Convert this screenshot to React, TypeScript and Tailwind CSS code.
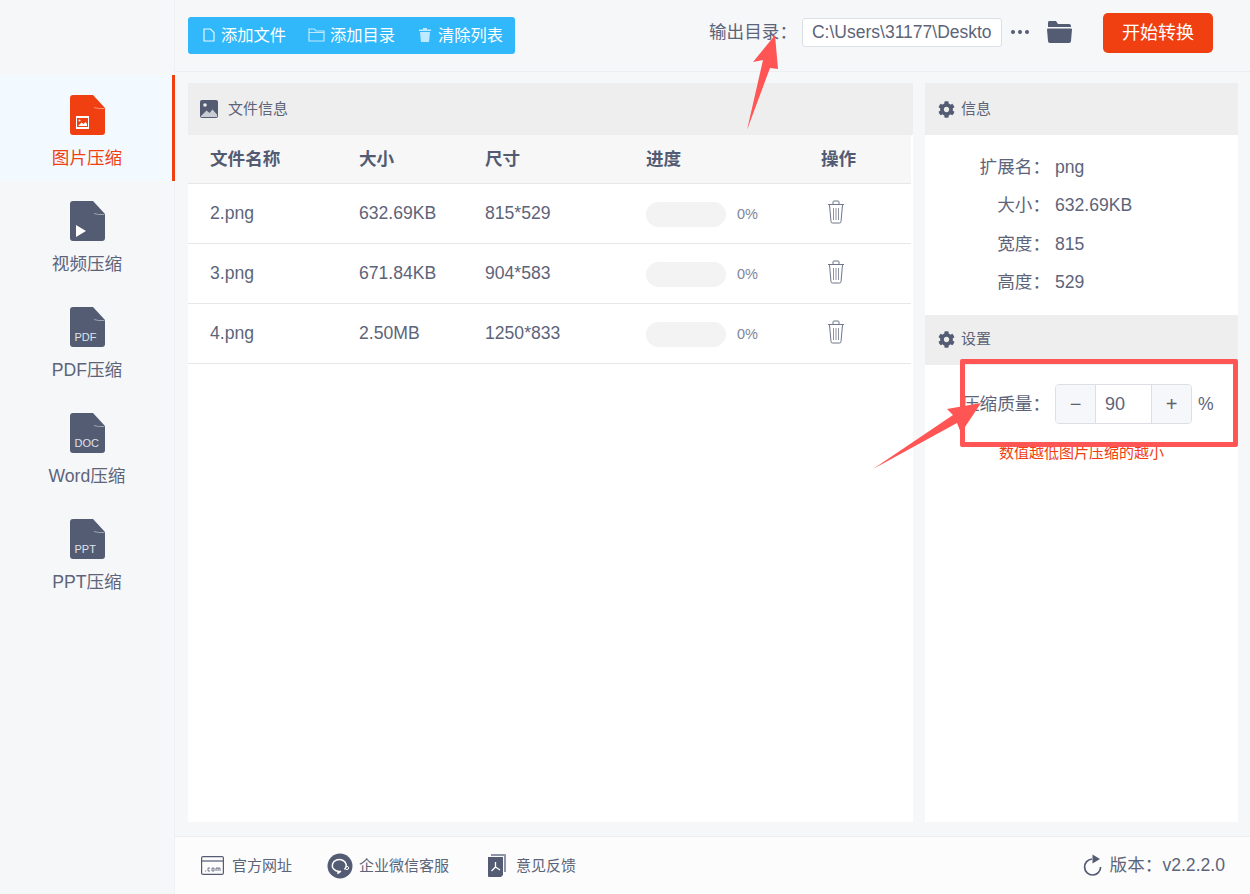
import React from 'react';
import { FaCog } from 'react-icons/fa';

const files = [
  { name: '2.png', size: '632.69KB', dim: '815*529' },
  { name: '3.png', size: '671.84KB', dim: '904*583' },
  { name: '4.png', size: '2.50MB', dim: '1250*833' },
];

const info = [
  { label: '扩展名：', value: 'png' },
  { label: '大小：', value: '632.69KB' },
  { label: '宽度：', value: '815' },
  { label: '高度：', value: '529' },
];

function FileShape({ color, children }: { color: string; children?: React.ReactNode }) {
  return (
    <div className="relative w-[35px] h-[40px]">
      <svg width="35" height="40" viewBox="0 0 35 40" className="block">
        <path d="M3 0H23L35 13V37a3 3 0 0 1-3 3H3a3 3 0 0 1-3-3V3a3 3 0 0 1 3-3Z" fill={color} />
        <path d="M24 12.5Q28 14 34.5 13.5" stroke="#ffffff" strokeOpacity="0.55" strokeWidth="0.8" fill="none" />
      </svg>
      {children}
    </div>
  );
}

function SideItem({ label, active, children }: { label: string; active?: boolean; children?: React.ReactNode }) {
  return (
    <div
      className={
        active
          ? 'h-[106px] flex flex-col items-center pt-[20px] pl-[2px] bg-[#f2faff] border-r-[3px] border-[#f04012] -mr-px'
          : 'h-[106px] flex flex-col items-center pt-[20px]'
      }
    >
      <FileShape color={active ? '#f04012' : '#545c73'}>{children}</FileShape>
      <span className={active ? 'mt-[10px] text-[17.6px] leading-[26px] text-[#f04012]' : 'mt-[10px] text-[17.6px] leading-[26px] text-[#5d6479]'}>
        {label}
      </span>
    </div>
  );
}

function DocTag({ text }: { text: string }) {
  return (
    <span className="absolute left-[5px] bottom-[4px] text-[11px] leading-[12px] text-[#dfe2ea]">{text}</span>
  );
}

function TrashIcon() {
  return (
    <svg width="18" height="24" viewBox="0 0 18 24" fill="none" stroke="#6f7689" strokeWidth="1">
      <path d="M1 4.5H17M6 4V2a1 1 0 0 1 1-1h4a1 1 0 0 1 1 1v2" />
      <path d="M2.5 5L4 21.5a1.5 1.5 0 0 0 1.5 1.5h7a1.5 1.5 0 0 0 1.5-1.5L15.5 5" />
      <path d="M6.5 8V20M9 8V20M11.5 8V20" strokeWidth="0.8" />
    </svg>
  );
}

export default function App() {
  return (
    <div className="relative w-[1250px] h-[894px] overflow-hidden flex bg-[#f6f7f9] text-[#5d6479] font-['Liberation_Sans','Noto_Sans_CJK_SC',sans-serif]">
      {/* sidebar */}
      <aside className="w-[175px] shrink-0 pt-[75px] border-r border-[#eef0f3]">
        <SideItem label="图片压缩" active>
          <div className="absolute left-[6px] top-[21px] w-[13px] h-[13px] bg-white flex items-center justify-center">
            <svg width="11" height="9" viewBox="0 0 11 9">
              <rect width="11" height="9" fill="#f04012" />
              <circle cx="2.5" cy="2.4" r="1" fill="#fff" />
              <path d="M1 8L4.5 4.5L6.5 6L8.5 4L10 6V8Z" fill="#fff" />
            </svg>
          </div>
        </SideItem>
        <SideItem label="视频压缩">
          <svg className="absolute left-[6px] top-[24px]" width="10" height="12" viewBox="0 0 10 12">
            <path d="M0 0L10 6L0 12Z" fill="#fff" />
          </svg>
        </SideItem>
        <SideItem label="PDF压缩">
          <DocTag text="PDF" />
        </SideItem>
        <SideItem label="Word压缩">
          <DocTag text="DOC" />
        </SideItem>
        <SideItem label="PPT压缩">
          <DocTag text="PPT" />
        </SideItem>
      </aside>

      <div className="flex-1 flex flex-col min-w-0">
        {/* top bar */}
        <header className="h-[72px] shrink-0 border-b border-[#eceef1] flex items-center pl-[13px] pr-[37px]">
          <div className="h-[37px] w-[327px] -mt-[1px] bg-[#30b8fa] rounded-[3px] flex items-center pl-[15px] text-[16.25px] text-white">
            <svg width="12" height="14" viewBox="0 0 12 14" fill="none" stroke="#e6f6ff" strokeWidth="1.2">
              <path d="M1 1H7.5L11 4.5V13H1Z" />
            </svg>
            <span className="ml-[6px]">添加文件</span>
            <svg className="ml-[22px]" width="17" height="14" viewBox="0 0 17 14" fill="none" stroke="#bfe9ff" strokeWidth="1.2">
              <path d="M1 13V1H6.5L8 3H16V13ZM1 4.5H16" />
            </svg>
            <span className="ml-[5px]">添加目录</span>
            <svg className="ml-[24px]" width="12" height="14" viewBox="0 0 12 14" fill="#bfe9ff">
              <path d="M4 0H8V1.5H12V3H0V1.5H4ZM1 4H11L10 14H2Z" />
            </svg>
            <span className="ml-[7px]">清除列表</span>
          </div>
          <span className="ml-[194px] text-[17.6px] whitespace-nowrap -mt-[7px]">输出目录：</span>
          <div className="ml-[5px] w-[200px] h-[29px] bg-white border border-[#dcdfe6] rounded-[3px] pl-[9px] text-[17.5px] leading-[27px] overflow-hidden whitespace-nowrap -mt-[7px]">
            C:\Users\31177\Deskto
          </div>
          <div className="ml-[9px] flex gap-[3px] -mt-[7px]">
            <i className="block w-[4px] h-[4px] rounded-full bg-[#545c73]" />
            <i className="block w-[4px] h-[4px] rounded-full bg-[#545c73]" />
            <i className="block w-[4px] h-[4px] rounded-full bg-[#545c73]" />
          </div>
          <svg className="ml-[18px] -mt-[7px]" width="25" height="22" viewBox="0 0 25 22">
            <path d="M2 0H9L11 3H22a2 2 0 0 1 2 2V6H1V2a2 2 0 0 1 1-2Z" fill="#545c73" />
            <path d="M1 7.5H24a1 1 0 0 1 1 1L24 20a2 2 0 0 1-2 2H3a2 2 0 0 1-2-2L0 8.5a1 1 0 0 1 1-1Z" fill="#545c73" />
          </svg>
          <button className="ml-[31px] w-[110px] h-[40px] -mt-[5px] bg-[#f04012] rounded-[5px] text-white text-[18px]">开始转换</button>
        </header>

        {/* panels */}
        <main className="flex-1 min-h-0 flex gap-[12px] pt-[11px] pb-[14px] pl-[13px] pr-[12px]">
          <section className="w-[725px] bg-white flex flex-col">
            <div className="h-[52px] bg-[#eeeeee] flex items-center pl-[12px] gap-[10px] text-[15px]">
              <svg width="18" height="18" viewBox="0 0 18 18">
                <rect width="18" height="18" rx="2" fill="#545c73" />
                <circle cx="5" cy="5" r="1.8" fill="#eee" />
                <path d="M1 16L6.5 10.5L9.5 13L12.5 9.5L17 14.5V17H1Z" fill="#c9ccd5" />
              </svg>
              <span>文件信息</span>
            </div>
            <div className="w-[723px]">
              <div className="h-[49px] bg-[#f7f7f7] border-b border-[#e6e7ea] pl-[22px] grid grid-cols-[149px_126px_161px_175px_1fr] items-center text-[17.6px] font-bold text-[#535b73]">
                <span>文件名称</span>
                <span>大小</span>
                <span>尺寸</span>
                <span>进度</span>
                <span>操作</span>
              </div>
              {files.map((f) => (
                <div key={f.name} className="h-[60px] border-b border-[#e6e7ea] pl-[22px] grid grid-cols-[149px_126px_161px_175px_1fr] items-center text-[17.6px] text-[#5d6479]">
                  <span className="-mt-[1px]">{f.name}</span>
                  <span className="-mt-[1px]">{f.size}</span>
                  <span className="-mt-[1px]">{f.dim}</span>
                  <div className="flex items-center pt-[1px]">
                    <div className="w-[80px] h-[25px] rounded-full bg-[#f3f3f3]" />
                    <span className="ml-[11px] pt-[1px] text-[14.5px] text-[#80869a]">0%</span>
                  </div>
                  <div className="pl-[6px] pt-[1px] -mt-[4px]">
                    <TrashIcon />
                  </div>
                </div>
              ))}
            </div>
          </section>

          <section className="w-[313px] bg-white flex flex-col">
            <div className="h-[52px] bg-[#eeeeee] flex items-center pl-[13px] gap-[6px] text-[15px]">
              <FaCog className="w-[17px] h-[17px] text-[#545c73]" />
              <span>信息</span>
            </div>
            <div className="pt-[13px] h-[180px] shrink-0">
              {info.map((row) => (
                <div key={row.label} className="h-[38.3px] flex items-center text-[17.6px]">
                  <span className="w-[125px] text-right">{row.label}</span>
                  <span className="ml-[5px]">{row.value}</span>
                </div>
              ))}
            </div>
            <div className="h-[50px] pb-[2px] bg-[#eeeeee] flex items-center pl-[13px] gap-[6px] text-[15px]">
              <FaCog className="w-[17px] h-[17px] text-[#545c73]" />
              <span>设置</span>
            </div>
            <div className="mt-[19px] flex items-center text-[17.6px]">
              <span className="w-[125px] text-right">压缩质量：</span>
              <div className="ml-[5px] w-[137px] h-[40px] border border-[#dcdfe6] rounded-[4px] flex overflow-hidden">
                <span className="w-[40px] bg-[#f5f7fa] border-r border-[#dcdfe6] flex items-center justify-center text-[20px] text-[#606266]">−</span>
                <span className="flex-1 flex items-center pl-[9px] text-[18px]">90</span>
                <span className="w-[40px] bg-[#f5f7fa] border-l border-[#dcdfe6] flex items-center justify-center text-[20px] text-[#606266]">+</span>
              </div>
              <span className="ml-[6px] text-[17.6px]">%</span>
            </div>
            <p className="mt-[19px] pl-[74px] text-[15px] leading-[20px] text-[#f04012] whitespace-nowrap">数值越低图片压缩的越小</p>
          </section>
        </main>

        {/* footer */}
        <footer className="h-[58px] shrink-0 bg-[#fcfcfc] border-t border-[#eceef1] flex items-center pl-[26px] pr-[25px] text-[15px] text-[#5d6479]">
          <svg width="23" height="19" viewBox="0 0 23 19" fill="none">
            <rect x="0.6" y="0.6" width="21.8" height="17.8" rx="1.5" stroke="#545c73" strokeWidth="1.2" />
            <path d="M1 5H22" stroke="#545c73" strokeWidth="1.2" />
            <path d="M4 15h1.2M7 12h2M7 15h2M7 12v3M11 12h2v3h-2zM15 15v-3h4v3M17 12v3" stroke="#545c73" strokeWidth="0.8" />
          </svg>
          <span className="ml-[8px] pt-[1px]">官方网址</span>
          <svg className="ml-[35px]" width="26" height="26" viewBox="0 0 26 26">
            <circle cx="13" cy="13" r="12.5" fill="#545c73" />
            <path d="M17.5 16.5A7 6 0 1 0 12 18.5L10.5 20.5L14 18.2" fill="none" stroke="#fff" strokeWidth="1.5" />
            <circle cx="20" cy="15" r="1.6" fill="none" stroke="#fff" strokeWidth="1" />
          </svg>
          <span className="ml-[6px] pt-[1px]">企业微信客服</span>
          <svg className="ml-[39px]" width="18" height="23" viewBox="0 0 18 23">
            <path d="M3 2V0H17a1 1 0 0 1 1 1V18H16V2Z" fill="#8f95a6" />
            <path d="M0 3H15V21L13 23H1a1 1 0 0 1-1-1Z" fill="#545c73" />
            <path d="M7.5 8V13M7.5 13L3.5 17M7.5 13L12 16" stroke="#fff" strokeWidth="1.3" fill="none" />
          </svg>
          <span className="ml-[10px] pt-[1px]">意见反馈</span>
          <div className="ml-auto flex items-center text-[17.6px]">
            <svg className="mr-[8px]" width="19" height="22" viewBox="0 0 19 22" fill="none">
              <path d="M9 5A8 8 0 1 0 17.6 13" stroke="#545c73" strokeWidth="1.7" />
              <path d="M9.5 0.5L17 5L9.5 9.5Z" fill="#545c73" />
            </svg>
            <span>版本：v2.2.2.0</span>
          </div>
        </footer>
      </div>

      {/* screenshot annotations drawn over the app */}
      <div className="absolute left-[960px] top-[359px] w-[278px] h-[88px] border-[5px] border-[#ff5555] rounded-[2px]" />
      <svg className="absolute left-0 top-0 pointer-events-none" width="1250" height="894" viewBox="0 0 1250 894">
        <path d="M775 35L753 62L763 60L747 130L770 68L778 69Z" fill="#ff5555" />
        <path d="M981 403L947 409L953 415L873 469L957 423L961 433Z" fill="#ff5555" />
      </svg>
    </div>
  );
}
